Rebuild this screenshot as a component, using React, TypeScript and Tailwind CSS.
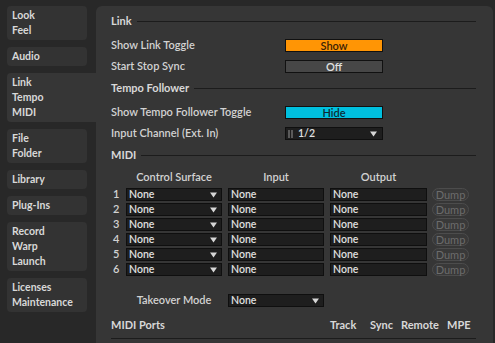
import React from "react";

const tabs: { lines: string[]; selected?: boolean }[] = [
  { lines: ["Look", "Feel"] },
  { lines: ["Audio"] },
  { lines: ["Link", "Tempo", "MIDI"], selected: true },
  { lines: ["File", "Folder"] },
  { lines: ["Library"] },
  { lines: ["Plug-Ins"] },
  { lines: ["Record", "Warp", "Launch"] },
  { lines: ["Licenses", "Maintenance"] },
];

const font = { fontFamily: "Lato, 'Liberation Sans', sans-serif" };

function Header({ title, className = "" }: { title: string; className?: string }) {
  return (
    <div className={`flex h-[14px] items-center pr-[17px] ${className}`}>
      <span className="font-bold text-[#d8d8d8]">{title}</span>
      <div className="ml-[5px] h-px flex-1 bg-[#1c1c1c]" />
    </div>
  );
}

function Toggle({ label, bg, fg }: { label: string; bg: string; fg: string }) {
  return (
    <div
      className={`flex h-[13px] w-[98px] items-center justify-center border border-[#111] text-[11px] font-semibold leading-none ${bg} ${fg}`}
    >
      {label}
    </div>
  );
}

function Arrow() {
  return (
    <svg width="7" height="6" viewBox="0 0 7 6" className="shrink-0">
      <path d="M0 0.5h7L3.5 5.5z" fill="#d6d6d6" />
    </svg>
  );
}

function Select({ value, arrow = true, width = "w-[96px]" }: { value: string; arrow?: boolean; width?: string }) {
  return (
    <div
      className={`flex h-[13px] ${width} items-center justify-between border border-[#0f0f0f] bg-[#1e1e1e] pl-[2px] pr-[4px] text-[10.5px] font-semibold leading-none text-[#e0e0e0]`}
    >
      <span>{value}</span>
      {arrow && <Arrow />}
    </div>
  );
}

function Row({ label, children, className = "" }: { label: string; children: React.ReactNode; className?: string }) {
  return (
    <div className={`flex h-[13px] items-center ${className}`}>
      <span className="w-[174px] font-semibold text-[#d2d2d2]">{label}</span>
      {children}
    </div>
  );
}

export default function App() {
  const rows = [1, 2, 3, 4, 5, 6];
  return (
    <div className="flex h-[343px] w-[495px] overflow-hidden bg-[#282828] text-[11px]" style={font}>
      <div className="flex w-[96px] shrink-0 flex-col gap-[7px] pl-[7px] pt-[6px]">
        {tabs.map((t) => (
          <div
            key={t.lines[0]}
            className={
              t.selected
                ? "w-[89px] rounded-l-[4px] bg-[#363636] py-[2px] pl-[5px]"
                : "w-[80px] rounded-[4px] bg-[#333333] py-[2px] pl-[5px]"
            }
          >
            {t.lines.map((l) => (
              <div key={l} className="h-[15px] text-[10.5px] font-bold leading-[15px] text-[#d8d8d8]">
                {l}
              </div>
            ))}
          </div>
        ))}
      </div>

      <div className="mr-[2px] mt-[6px] flex flex-1 flex-col rounded-t-[6px] bg-[#363636] pl-[15px]">
        <Header title="Link" className="mt-[8px]" />
        <Row label="Show Link Toggle" className="mt-[11px]">
          <Toggle label="Show" bg="bg-[#ff9505]" fg="text-[#3a2205]" />
        </Row>
        <Row label="Start Stop Sync" className="mt-[8px]">
          <Toggle label="Off" bg="bg-[#474747]" fg="text-[#e0e0e0]" />
        </Row>
        <Header title="Tempo Follower" className="mt-[8px]" />
        <Row label="Show Tempo Follower Toggle" className="mt-[11px]">
          <Toggle label="Hide" bg="bg-[#00c0df]" fg="text-[#0e2a33]" />
        </Row>
        <Row label="Input Channel (Ext. In)" className="mt-[8px]">
          <div className="flex h-[13px] w-[98px] items-center justify-between border border-[#0f0f0f] bg-[#1e1e1e] pl-[2px] pr-[5px] text-[10.5px] font-semibold leading-none text-[#e0e0e0]">
            <span className="flex items-center">
              <span className="mr-[1px] h-[8px] w-[2px] bg-[#5a5a5a]" />
              <span className="mr-[5px] h-[8px] w-[2px] bg-[#5a5a5a]" />
              1/2
            </span>
            <Arrow />
          </div>
        </Row>
        <Header title="MIDI" className="mt-[8px]" />

        <div className="mt-[8px] flex h-[14px] items-center font-semibold text-[#d2d2d2]">
          <span className="w-[15px]" />
          <span className="w-[96px] text-center">Control Surface</span>
          <span className="ml-[6px] w-[96px] text-center">Input</span>
          <span className="ml-[6px] w-[97px] text-center">Output</span>
        </div>

        <div className="mt-[4px] flex flex-col gap-[2px]">
          {rows.map((n) => (
            <div key={n} className="flex h-[13px] items-center">
              <span className="w-[15px] pl-[2px] font-semibold text-[#d2d2d2]">{n}</span>
              <Select value="None" />
              <div className="ml-[6px]">
                <Select value="None" arrow={false} />
              </div>
              <div className="ml-[6px]">
                <Select value="None" arrow={false} width="w-[97px]" />
              </div>
              <div className="ml-[5px] flex h-[13px] w-[37px] items-center justify-center rounded-full border border-[#4c4c4c] bg-[#393939] text-[11px] leading-none text-[#6c6c6c]">
                Dump
              </div>
            </div>
          ))}
        </div>

        <div className="mt-[18px] flex h-[13px] items-center">
          <span className="w-[15px]" />
          <span className="w-[96px] text-center font-semibold text-[#d2d2d2]">Takeover Mode</span>
          <div className="ml-[6px]">
            <Select value="None" />
          </div>
        </div>

        <div className="mt-[11px] flex h-[14px] items-center pr-[25px] font-bold text-[#d8d8d8]">
          <span className="flex-1">MIDI Ports</span>
          <span className="w-[40px]">Track</span>
          <span className="w-[31px]">Sync</span>
          <span className="w-[46px]">Remote</span>
          <span className="w-[21px]">MPE</span>
        </div>
        <div className="mr-[17px] mt-[6px] h-px bg-[#1c1c1c]" />
      </div>
    </div>
  );
}
